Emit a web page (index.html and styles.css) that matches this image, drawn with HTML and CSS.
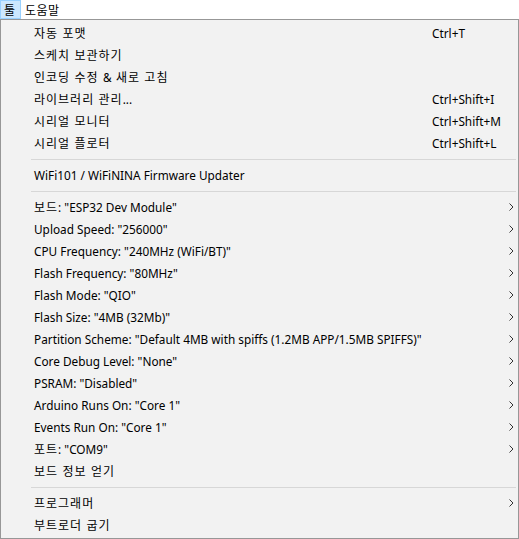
FILE: index.html
```html
<!DOCTYPE html>
<html lang="ko">
<head>
<meta charset="utf-8">
<link rel="stylesheet" href="styles.css">
</head>
<body>
<div class="menubar">
  <span class="mb-item active"><span class="ko">툴</span></span>
  <span class="mb-item"><span class="ko">도움말</span></span>
</div>
<div class="popup">
  <div class="row"><span class="label"><span class="ko">자동 포맷</span></span><span class="key">Ctrl+T</span></div>
  <div class="row"><span class="label"><span class="ko">스케치 보관하기</span></span></div>
  <div class="row"><span class="label"><span class="ko">인코딩 수정 </span>&amp;<span class="ko"> 새로 고침</span></span></div>
  <div class="row"><span class="label"><span class="ko">라이브러리 관리</span>...</span><span class="key">Ctrl+Shift+I</span></div>
  <div class="row"><span class="label"><span class="ko">시리얼 모니터</span></span><span class="key">Ctrl+Shift+M</span></div>
  <div class="row"><span class="label"><span class="ko">시리얼 플로터</span></span><span class="key">Ctrl+Shift+L</span></div>
  <div class="sep"></div>
  <div class="row"><span class="label">WiFi101 / WiFiNINA Firmware Updater</span></div>
  <div class="sep"></div>
  <div class="row"><span class="label"><span class="ko">보드</span>: "ESP32 Dev Module"</span><svg class="arrow" viewBox="0 0 5 8"><polyline points="0.5,0.5 4,4 0.5,7.5"/></svg></div>
  <div class="row"><span class="label">Upload Speed: "256000"</span><svg class="arrow" viewBox="0 0 5 8"><polyline points="0.5,0.5 4,4 0.5,7.5"/></svg></div>
  <div class="row"><span class="label">CPU Frequency: "240MHz (WiFi/BT)"</span><svg class="arrow" viewBox="0 0 5 8"><polyline points="0.5,0.5 4,4 0.5,7.5"/></svg></div>
  <div class="row"><span class="label">Flash Frequency: "80MHz"</span><svg class="arrow" viewBox="0 0 5 8"><polyline points="0.5,0.5 4,4 0.5,7.5"/></svg></div>
  <div class="row"><span class="label">Flash Mode: "QIO"</span><svg class="arrow" viewBox="0 0 5 8"><polyline points="0.5,0.5 4,4 0.5,7.5"/></svg></div>
  <div class="row"><span class="label">Flash Size: "4MB (32Mb)"</span><svg class="arrow" viewBox="0 0 5 8"><polyline points="0.5,0.5 4,4 0.5,7.5"/></svg></div>
  <div class="row"><span class="label">Partition Scheme: "Default 4MB with spiffs (1.2MB APP/1.5MB SPIFFS)"</span><svg class="arrow" viewBox="0 0 5 8"><polyline points="0.5,0.5 4,4 0.5,7.5"/></svg></div>
  <div class="row"><span class="label">Core Debug Level: "None"</span><svg class="arrow" viewBox="0 0 5 8"><polyline points="0.5,0.5 4,4 0.5,7.5"/></svg></div>
  <div class="row"><span class="label">PSRAM: "Disabled"</span><svg class="arrow" viewBox="0 0 5 8"><polyline points="0.5,0.5 4,4 0.5,7.5"/></svg></div>
  <div class="row"><span class="label">Arduino Runs On: "Core 1"</span><svg class="arrow" viewBox="0 0 5 8"><polyline points="0.5,0.5 4,4 0.5,7.5"/></svg></div>
  <div class="row"><span class="label">Events Run On: "Core 1"</span><svg class="arrow" viewBox="0 0 5 8"><polyline points="0.5,0.5 4,4 0.5,7.5"/></svg></div>
  <div class="row"><span class="label"><span class="ko">포트</span>: "COM9"</span><svg class="arrow" viewBox="0 0 5 8"><polyline points="0.5,0.5 4,4 0.5,7.5"/></svg></div>
  <div class="row"><span class="label"><span class="ko">보드 정보 얻기</span></span></div>
  <div class="sep"></div>
  <div class="row"><span class="label"><span class="ko">프로그래머</span></span><svg class="arrow" viewBox="0 0 5 8"><polyline points="0.5,0.5 4,4 0.5,7.5"/></svg></div>
  <div class="row"><span class="label"><span class="ko">부트로더 굽기</span></span></div>
</div>
</body>
</html>
```
FILE: styles.css
```css
html, body {
  margin: 0;
  padding: 0;
  background: #ffffff;
}
body {
  font-family: "Noto Sans", "Noto Sans CJK KR", sans-serif;
  font-size: 11.8px;
  color: #000000;
  width: 519px;
  height: 539px;
  overflow: hidden;
}
.ko {
  font-family: "Noto Sans CJK KR", "Noto Sans", sans-serif;
  font-size: 12px;
  letter-spacing: 1px;
  line-height: 1;
}
.menubar {
  display: flex;
  height: 19px;
  align-items: stretch;
}
.mb-item {
  display: flex;
  align-items: center;
  padding: 0 4px;
  line-height: 1;
}
.mb-item .ko {
  letter-spacing: 0.5px;
}
.mb-item.active {
  background: #cce8ff;
  border: 1px solid #99d1ff;
  padding: 0 3px;
  width: 21px;
  box-sizing: border-box;
}
.popup {
  box-sizing: border-box;
  width: 519px;
  height: 520px;
  border: 1px solid #979797;
  background: #f2f2f2;
  padding: 2px 0;
}
.row {
  display: grid;
  grid-template-columns: 398px 1fr 9px;
  align-items: center;
  height: 22px;
  padding-left: 33px;
  white-space: nowrap;
}
.label {
  grid-column: 1;
}
.key {
  grid-column: 2;
}
.arrow {
  grid-column: 3;
  width: 5px;
  height: 8px;
  fill: none;
  stroke: #333333;
  stroke-width: 1;
}
.sep {
  height: 10px;
  margin: 0 2px 0 30px;
  display: flex;
  align-items: center;
}
.sep::before {
  content: "";
  display: block;
  width: 100%;
  height: 1px;
  background: #d7d7d7;
}
```
